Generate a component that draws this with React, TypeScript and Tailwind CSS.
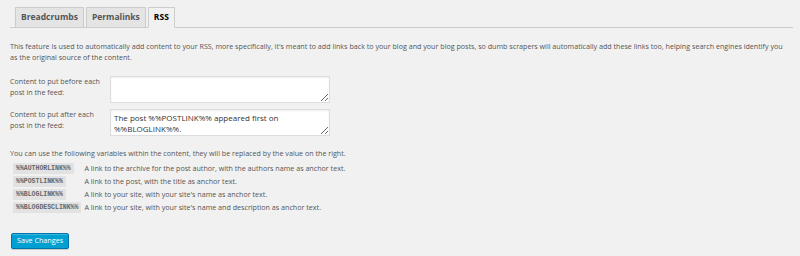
import { useState } from "react";

const tabs = ["Breadcrumbs", "Permalinks", "RSS"];

const variables = [
	{ code: "%%AUTHORLINK%%", text: "A link to the archive for the post author, with the authors name as anchor text." },
	{ code: "%%POSTLINK%%", text: "A link to the post, with the title as anchor text." },
	{ code: "%%BLOGLINK%%", text: "A link to your site, with your site's name as anchor text." },
	{ code: "%%BLOGDESCLINK%%", text: "A link to your site, with your site's name and description as anchor text." },
];

function App() {
	const [active, setActive] = useState("RSS");

	return (
		<div
			className="w-[800px] h-[256px] bg-[#f1f1f1] text-[#555] overflow-hidden"
			style={{ fontFamily: '"Open Sans", sans-serif' }}
		>
			<div className="pl-[10px] pr-[7px] pt-[7px]">
				<div className="flex gap-[2px] border-b border-[#ccc] pl-[5px]">
					{tabs.map((tab) => (
						<button
							key={tab}
							onClick={() => setActive(tab)}
							className={
								tab === active
									? "h-[21px] px-[5px] -mb-px border border-[#ccc] border-b-[#f1f1f1] bg-[#f1f1f1] text-[8.5px] font-bold text-[#000] leading-none"
									: "h-[20px] px-[5px] border border-b-0 border-[#ccc] bg-[#e4e4e4] text-[8.5px] font-bold text-[#555] leading-none"
							}
						>
							{tab}
						</button>
					))}
				</div>
			</div>

			<div className="px-[10px]">
				<p className="mt-[13px] text-[7.15px] leading-[11px]">
					This feature is used to automatically add content to your RSS, more specifically, it's meant to add links back to your blog and your blog posts, so dumb scrapers will automatically add these links too, helping search engines identify you as the original source of the content.
				</p>

				<div className="mt-[13px] flex flex-col gap-[6px]">
					<div className="flex">
						<label className="w-[100px] text-[7.15px] leading-[11px]">
							Content to put before each post in the feed:
						</label>
						<textarea
							className="w-[220px] h-[27px] bg-white border border-[#ddd] shadow-[inset_0_1px_2px_rgba(0,0,0,0.07)] text-[8px] leading-[11px] px-[3px] py-[2px] outline-none"
							defaultValue=""
						/>
					</div>
					<div className="flex">
						<label className="w-[100px] text-[7.15px] leading-[11px]">
							Content to put after each post in the feed:
						</label>
						<textarea
							className="w-[220px] h-[27px] bg-white border border-[#ddd] shadow-[inset_0_1px_2px_rgba(0,0,0,0.07)] text-[8px] leading-[11px] px-[3px] py-[2px] outline-none text-[#333]"
							defaultValue="The post %%POSTLINK%% appeared first on %%BLOGLINK%%."
						/>
					</div>
				</div>

				<p className="mt-[12px] text-[7.15px] leading-[11px]">
					You can use the following variables within the content, they will be replaced by the value on the right.
				</p>

				<table className="mt-[2px] ml-[3px] border-separate border-spacing-y-[2px]">
					<tbody>
						{variables.map((v) => (
							<tr key={v.code}>
								<td className="w-[71px] p-0 pr-[3px] align-middle">
									<code
										className="block w-fit bg-[#e2e2e2] px-[3px] text-[6.5px] leading-[11px] font-bold text-[#666]"
										style={{ fontFamily: '"Liberation Mono", monospace' }}
									>
										{v.code}
									</code>
								</td>
								<td className="p-0 text-[7.15px] leading-[11px]">{v.text}</td>
							</tr>
						))}
					</tbody>
				</table>

				<button className="mt-[18px] ml-px h-[16px] px-[5px] rounded-[2px] bg-[#00a0d2] border border-[#0073aa] text-white text-[7.2px] leading-none shadow-[inset_0_1px_0_rgba(120,200,230,0.5),0_1px_0_rgba(0,0,0,0.15)]">
					Save Changes
				</button>
			</div>
		</div>
	);
}

export default App;
